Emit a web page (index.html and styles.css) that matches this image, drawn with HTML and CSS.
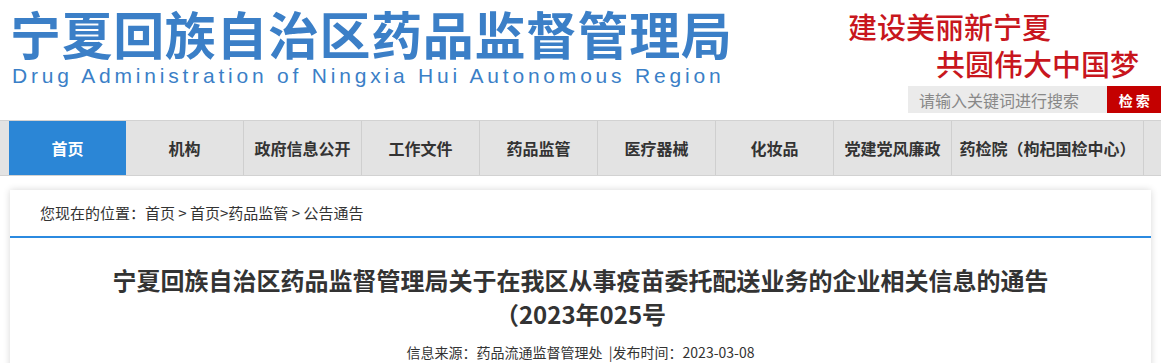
FILE: index.html
```html
<!DOCTYPE html>
<html lang="zh-CN">
<head>
    <meta charset="UTF-8">
    <meta name="viewport" content="width=device-width, initial-scale=1.0">
    <title>宁夏回族自治区药品监督管理局</title>
    <link rel="stylesheet" href="styles.css">
</head>
<body>

    <header class="top">
        <div class="logo">
            <div class="logo-cn">宁夏回族自治区药品监督管理局</div>
            <div class="logo-en">Drug Administration of Ningxia Hui Autonomous Region</div>
        </div>
        <div class="top-right">
            <div class="slogan">建设美丽新宁夏</div>
            <div class="slogan slogan-2">共圆伟大中国梦</div>
            <form class="search" onsubmit="return false">
                <input type="text" class="search-input" placeholder="请输入关键词进行搜索">
                <button type="submit" class="search-button">检 索</button>
            </form>
        </div>
    </header>

    <nav class="nav">
        <ul class="nav-list">
            <li class="nav-item active">首页</li>
            <li class="nav-item">机构</li>
            <li class="nav-item">政府信息公开</li>
            <li class="nav-item">工作文件</li>
            <li class="nav-item">药品监管</li>
            <li class="nav-item">医疗器械</li>
            <li class="nav-item">化妆品</li>
            <li class="nav-item">党建党风廉政</li>
            <li class="nav-item wide">药检院（枸杞国检中心）</li>
        </ul>
    </nav>

    <main class="card">
        <div class="crumbs">您现在的位置：首页 &gt; 首页&gt;药品监管 &gt; 公告通告</div>
        <h1 class="article-title">宁夏回族自治区药品监督管理局关于在我区从事疫苗委托配送业务的企业相关信息的通告（2023年025号</h1>
        <p class="article-meta">信息来源：药品流通监督管理处 &nbsp;|发布时间：2023-03-08</p>
    </main>

</body>
</html>
```

FILE: styles.css
```css
body {
    margin: 0;
    padding: 0;
    background-color: #fff;
    font-family: "Microsoft YaHei", "Noto Sans CJK SC", sans-serif;
    color: #333;
    text-spacing-trim: space-all;
    overflow: hidden;
}

/* 头部 */
.top {
    display: flex;
    height: 120px;
}

.logo {
    padding: 3px 0 0 10px;
}

.logo-cn {
    font-size: 51px;
    line-height: 61px;
    font-weight: bold;
    letter-spacing: 0.6px;
    color: #3b7fc7;
    white-space: nowrap;
}

.logo-en {
    margin-left: 2px;
    font-family: "Liberation Sans", Arial, sans-serif;
    font-size: 21px;
    line-height: 24px;
    letter-spacing: 3.8px;
    color: #3b7fc7;
    white-space: nowrap;
}

.top-right {
    margin-left: auto;
    width: 313px;
    padding-top: 8px;
}

.slogan {
    font-size: 29px;
    line-height: 37px;
    font-weight: 500;
    color: #c8161d;
}

.slogan-2 {
    padding-left: 88px;
}

.search {
    display: flex;
    margin: 4px 0 0 60px;
}

.search-input {
    width: 201px;
    height: 27px;
    padding: 0 0 0 11px;
    border: none;
    background-color: #ebebeb;
    font-family: "Noto Sans CJK SC", sans-serif;
    font-size: 16px;
    color: #888;
    box-sizing: border-box;
    outline: none;
}

.search-input::placeholder {
    color: #888;
}

.search-button {
    width: 54px;
    height: 27px;
    border: none;
    background-color: #c40000;
    color: #fff;
    font-family: "Noto Sans CJK SC", sans-serif;
    font-size: 14px;
    font-weight: bold;
    padding: 0;
    cursor: pointer;
}

/* 导航 */
.nav {
    background-color: #e3e3e3;
    border-top: 1px solid #d2d2d2;
    border-bottom: 1px solid #d2d2d2;
}

.nav-list {
    display: flex;
    margin: 0;
    padding: 0 0 0 9px;
    list-style: none;
}

.nav-item {
    width: 118px;
    height: 54px;
    line-height: 54px;
    border-right: 1px solid #cfcfcf;
    box-sizing: border-box;
    text-align: center;
    font-size: 16px;
    font-weight: bold;
    color: #333;
    white-space: nowrap;
}

.nav-item.active {
    width: 117px;
    background-color: #2b86d6;
    color: #fff;
    border-right: none;
}

.nav-item.wide {
    width: 192px;
}

/* 正文 */
.card {
    margin: 14px 10px 0;
    background-color: #fff;
    box-shadow: 0 0 7px rgba(0, 0, 0, 0.16);
    height: 300px;
}

.crumbs {
    height: 46px;
    line-height: 46px;
    padding-left: 30px;
    font-size: 15px;
    color: #333;
    border-bottom: 2px solid #2b8ae0;
}

.article-title {
    width: 946px;
    margin: 25px auto 0;
    font-size: 24px;
    line-height: 34px;
    font-weight: bold;
    text-align: center;
    color: #333;
}

.article-meta {
    margin: 11px 0 0;
    font-size: 14px;
    line-height: 20px;
    text-align: center;
    color: #333;
}
```
